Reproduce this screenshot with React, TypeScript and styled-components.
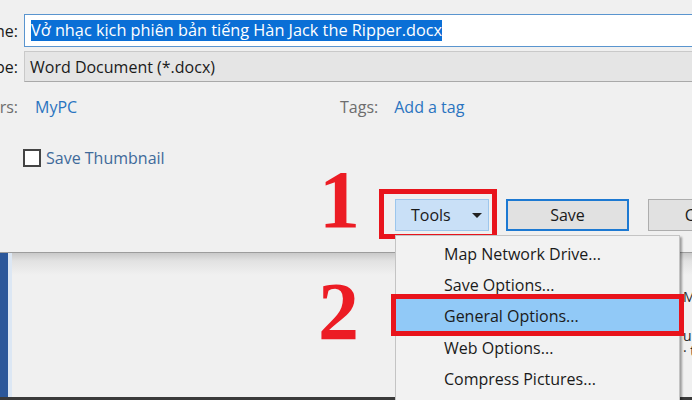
import React from "react";
import styled, { createGlobalStyle } from "styled-components";

const GlobalStyle = createGlobalStyle`
  html, body { margin: 0; padding: 0; }
  body {
    width: 692px;
    height: 400px;
    overflow: hidden;
    background: #f0f0f0;
    font-family: "Open Sans", "Noto Sans", sans-serif;
  }
`;

const Page = styled.div`
  position: relative;
  width: 692px;
  height: 400px;
  overflow: hidden;
  display: flex;
  flex-direction: column;
  font-size: 16px;
  color: #1a1a1a;
`;

const Dialog = styled.div`
  height: 252px;
  flex: none;
  background: #f0f0f0;
  border-bottom: 1px solid #9c9c9c;
  display: flex;
  flex-direction: column;
`;

const Form = styled.div`
  display: grid;
  grid-template-columns: 120px 1fr;
  column-gap: 6px;
  margin-left: -102px;
  width: 840px;
  padding-top: 14px;
  align-items: center;
`;

const Label = styled.div<{ $muted?: boolean; $mt?: number }>`
  text-align: right;
  white-space: nowrap;
  color: ${(p) => (p.$muted ? "#6d6d6d" : "#1a1a1a")};
  margin-top: ${(p) => p.$mt ?? 0}px;
`;

const NameBox = styled.div`
  height: 33px;
  box-sizing: border-box;
  border: 1px solid #5a95cf;
  background: #fff;
  display: flex;
  align-items: center;
  padding-left: 6px;
`;

const Selected = styled.span`
  background: #0a6fd6;
  color: #fff;
  line-height: 21px;
  white-space: nowrap;
  font-size: 16.3px;
`;

const TypeBox = styled.div`
  margin-top: 4px;
  height: 31px;
  box-sizing: border-box;
  border: 1px solid #c9c9c9;
  border-bottom-color: #a9a9a9;
  background: #e5e5e5;
  display: flex;
  align-items: center;
  padding-left: 5px;
`;

const MetaRow = styled.div`
  margin-top: 14px;
  height: 22px;
  display: grid;
  grid-template-columns: 316px auto auto 1fr;
  align-items: center;
`;

const LinkText = styled.span<{ $pl?: number }>`
  color: #2a74c0;
  padding-left: ${(p) => p.$pl ?? 0}px;
`;

const MutedText = styled.span`
  color: #6d6d6d;
  padding-right: 16px;
`;

const ThumbRow = styled.label`
  margin-top: 29px;
  margin-left: -1px;
  display: flex;
  align-items: center;
  gap: 5px;
  color: #3f6a9a;
`;

const Check = styled.span`
  width: 18px;
  height: 18px;
  box-sizing: border-box;
  border: 2px solid #444;
  background: #fff;
`;

const ButtonRow = styled.div`
  margin-top: 20px;
  padding-left: 379px;
  display: flex;
  align-items: flex-start;
`;

const AnnotBox = styled.div`
  border: 5px solid #e8141c;
  padding: 5px 3px 3px 11px;
`;

const Button = styled.div<{ $variant?: "tools" | "default" | "plain"; $ml?: number }>`
  height: 32px;
  box-sizing: border-box;
  display: flex;
  align-items: center;
  justify-content: center;
  white-space: nowrap;
  margin-left: ${(p) => p.$ml ?? 0}px;
  margin-top: ${(p) => (p.$variant === "tools" ? 0 : 10)}px;
  width: ${(p) => (p.$variant === "tools" ? 94 : 123)}px;
  background: ${(p) => (p.$variant === "tools" ? "#c9e0f7" : "#e1e1e1")};
  border: ${(p) =>
    p.$variant === "tools"
      ? "1px solid #9cc6ec"
      : p.$variant === "default"
      ? "2px solid #1d79d2"
      : "1px solid #adadad"};
  ${(p) =>
    p.$variant === "tools" &&
    `justify-content: space-between; padding: 0 6px 0 15px;`}
  flex: none;
`;

const Caret = styled.span`
  width: 0;
  height: 0;
  border-left: 5px solid transparent;
  border-right: 5px solid transparent;
  border-top: 5px solid #222;
`;

const WordArea = styled.div`
  flex: 1;
  display: flex;
  border-bottom: 3px solid #3a3a3a;
`;

const BlueStrip = styled.div`
  width: 8px;
  background: #2b579a;
`;

const LightStrip = styled.div`
  width: 4px;
  background: #dce7f4;
`;

const DocMain = styled.div`
  flex: 1;
  display: flex;
  justify-content: flex-end;
  background: linear-gradient(#c9c9c9 0px, #e2e2e2 8px, #f0f0f0 22px);
  padding-top: 36px;
`;

const DocText = styled.div`
  width: 40px;
  margin-right: -31px;
  display: flex;
  flex-direction: column;
  font-size: 14px;
  color: #2a2a2a;
  line-height: 15px;
`;

const DocLine = styled.span<{ $mt?: number }>`
  margin-top: ${(p) => p.$mt ?? 0}px;
  white-space: nowrap;
`;

const Menu = styled.div`
  position: absolute;
  left: 395px;
  top: 235px;
  width: 285px;
  height: 180px;
  box-sizing: border-box;
  background: #f2f2f2;
  border: 1px solid #c4c4c4;
  box-shadow: 2px 2px 2px rgba(0, 0, 0, 0.35);
  padding-top: 1px;
  display: flex;
  flex-direction: column;
`;

const MenuItem = styled.div<{ $active?: boolean }>`
  height: ${(p) => (p.$active ? 32 : 31)}px;
  box-sizing: border-box;
  display: flex;
  align-items: center;
  padding: 2px 0 0 48px;
  white-space: nowrap;
  color: #1a1a1a;
  background: ${(p) => (p.$active ? "#91c9f7" : "transparent")};
  outline: ${(p) => (p.$active ? "5px solid #e8141c" : "none")};
`;

const StepNumber = styled.div<{ $left: number; $top: number }>`
  position: absolute;
  left: ${(p) => p.$left}px;
  top: ${(p) => p.$top}px;
  font-family: "Liberation Serif", "DejaVu Serif", serif;
  font-weight: bold;
  font-size: 82px;
  line-height: 1;
  color: #ec1c24;
`;

export default function App() {
  return (
    <>
      <GlobalStyle />
      <Page>
        <Dialog>
          <Form>
            <Label>File name:</Label>
            <NameBox>
              <Selected>Vở nhạc kịch phiên bản tiếng Hàn Jack the Ripper.docx</Selected>
            </NameBox>
            <Label $mt={4}>Save as type:</Label>
            <TypeBox>Word Document (*.docx)</TypeBox>
            <Label $muted $mt={14}>Authors:</Label>
            <MetaRow>
              <LinkText $pl={11}>MyPC</LinkText>
              <MutedText>Tags:</MutedText>
              <LinkText>Add a tag</LinkText>
            </MetaRow>
            <span />
            <ThumbRow>
              <Check />
              Save Thumbnail
            </ThumbRow>
          </Form>
          <ButtonRow>
            <AnnotBox>
              <Button $variant="tools">
                Tools
                <Caret />
              </Button>
            </AnnotBox>
            <Button $variant="default" $ml={9}>Save</Button>
            <Button $variant="plain" $ml={19}>Cancel</Button>
          </ButtonRow>
        </Dialog>
        <WordArea>
          <BlueStrip />
          <LightStrip />
          <DocMain>
            <DocText>
              <DocLine>My</DocLine>
              <DocLine $mt={24}>ur</DocLine>
              <DocLine>· to</DocLine>
            </DocText>
          </DocMain>
        </WordArea>
        <Menu>
          <MenuItem>Map Network Drive...</MenuItem>
          <MenuItem>Save Options...</MenuItem>
          <MenuItem $active>General Options...</MenuItem>
          <MenuItem>Web Options...</MenuItem>
          <MenuItem>Compress Pictures...</MenuItem>
        </Menu>
        <StepNumber $left={319} $top={159}>1</StepNumber>
        <StepNumber $left={318} $top={271}>2</StepNumber>
      </Page>
    </>
  );
}
